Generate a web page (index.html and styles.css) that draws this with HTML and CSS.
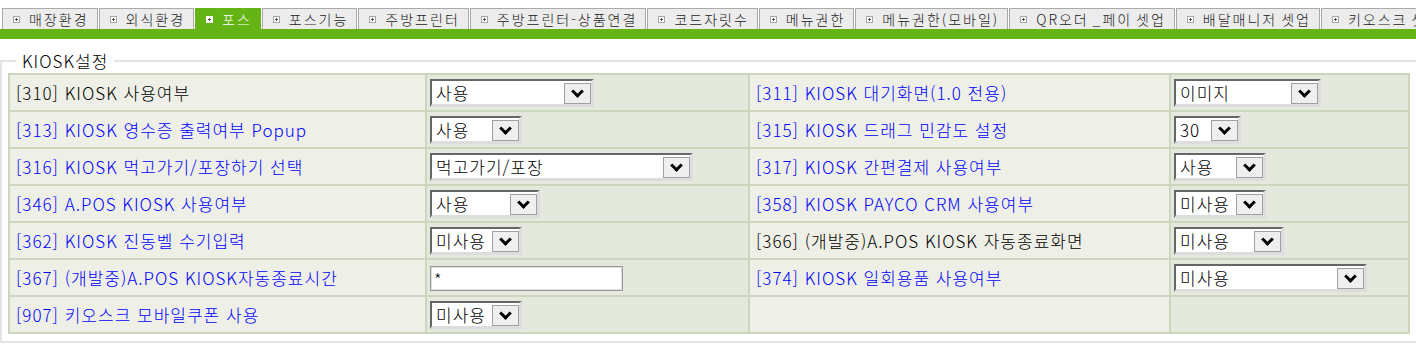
FILE: index.html
```html
<!DOCTYPE html>
<html lang="ko">
<head>
  <meta charset="UTF-8" />
  <title>KIOSK설정</title>
  <meta name="viewport" content="width=device-width, initial-scale=1.0" />
  <link rel="stylesheet" href="styles.css">
</head>
<body>
  <div id="tabs">
    <a class="tab">매장환경</a>
    <a class="tab">외식환경</a>
    <a class="tab active">포스</a>
    <a class="tab">포스기능</a>
    <a class="tab">주방프린터</a>
    <a class="tab">주방프린터-상품연결</a>
    <a class="tab">코드자릿수</a>
    <a class="tab">메뉴권한</a>
    <a class="tab">메뉴권한(모바일)</a>
    <a class="tab">QR오더 _페이 셋업</a>
    <a class="tab">배달매니저 셋업</a>
    <a class="tab">키오스크 셋업</a>
  </div>
  <div id="tabline"></div>

  <fieldset id="setup">
    <legend>KIOSK설정</legend>
    <table class="opts">
      <colgroup>
        <col class="c-label1">
        <col class="c-value1">
        <col class="c-label2">
        <col class="c-value2">
      </colgroup>
      <tr>
        <td class="label">[310] KIOSK 사용여부</td>
        <td class="value"><span class="sel w164"><span class="txt">사용</span><span class="btn"></span></span></td>
        <td class="label"><a>[311] KIOSK 대기화면(1.0 전용)</a></td>
        <td class="value"><span class="sel w147"><span class="txt">이미지</span><span class="btn"></span></span></td>
      </tr>
      <tr>
        <td class="label"><a>[313] KIOSK 영수증 출력여부 Popup</a></td>
        <td class="value"><span class="sel w92"><span class="txt">사용</span><span class="btn"></span></span></td>
        <td class="label"><a>[315] KIOSK 드래그 민감도 설정</a></td>
        <td class="value"><span class="sel w67"><span class="txt">30</span><span class="btn"></span></span></td>
      </tr>
      <tr>
        <td class="label"><a>[316] KIOSK 먹고가기/포장하기 선택</a></td>
        <td class="value"><span class="sel w263"><span class="txt">먹고가기/포장</span><span class="btn"></span></span></td>
        <td class="label"><a>[317] KIOSK 간편결제 사용여부</a></td>
        <td class="value"><span class="sel w92"><span class="txt">사용</span><span class="btn"></span></span></td>
      </tr>
      <tr>
        <td class="label"><a>[346] A.POS KIOSK 사용여부</a></td>
        <td class="value"><span class="sel w110"><span class="txt">사용</span><span class="btn"></span></span></td>
        <td class="label"><a>[358] KIOSK PAYCO CRM 사용여부</a></td>
        <td class="value"><span class="sel w92"><span class="txt">미사용</span><span class="btn"></span></span></td>
      </tr>
      <tr>
        <td class="label"><a>[362] KIOSK 진동벨 수기입력</a></td>
        <td class="value"><span class="sel w92"><span class="txt">미사용</span><span class="btn"></span></span></td>
        <td class="label">[366] (개발중)A.POS KIOSK 자동종료화면</td>
        <td class="value"><span class="sel w110"><span class="txt">미사용</span><span class="btn"></span></span></td>
      </tr>
      <tr>
        <td class="label"><a>[367] (개발중)A.POS KIOSK자동종료시간</a></td>
        <td class="value"><input class="field" type="text" value="*"></td>
        <td class="label"><a>[374] KIOSK 일회용품 사용여부</a></td>
        <td class="value"><span class="sel w193"><span class="txt">미사용</span><span class="btn"></span></span></td>
      </tr>
      <tr>
        <td class="label"><a>[907] 키오스크 모바일쿠폰 사용</a></td>
        <td class="value"><span class="sel w92"><span class="txt">미사용</span><span class="btn"></span></span></td>
        <td class="label"></td>
        <td class="value"></td>
      </tr>
    </table>
  </fieldset>
</body>
</html>
```

FILE: styles.css
```css
:root {
  --green: #64b416;
  --tab-bg: #ececec;
  --line: #ccd5bd;
  --label-bg: #eef0e7;
  --value-bg: #e5e8dc;
  --link: #0000ff;
}
body {
  margin: 0;
  background: #fff;
  font-family: "Noto Sans CJK KR", sans-serif;
  font-weight: 300;
  color: #000;
}

/* tab strip */
#tabs {
  display: flex;
  padding: 8px 0 0 2px;
  white-space: nowrap;
  overflow: hidden;
}
.tab {
  display: flex;
  align-items: center;
  flex-shrink: 0;
  gap: 9px;
  height: 20px;
  padding: 0 8px 0 10px;
  margin-right: 1px;
  border: 1px solid #aaa;
  border-bottom: none;
  background: var(--tab-bg);
  color: #222;
  font-size: 14px;
  letter-spacing: 2px;
  word-spacing: -2px;
  cursor: pointer;
}
.tab::before {
  content: "";
  width: 7px;
  height: 7px;
  flex-shrink: 0;
  box-sizing: border-box;
  border: 1px solid #a6a6a6;
  background:
    linear-gradient(#555, #555) center / 3px 1px no-repeat,
    linear-gradient(#555, #555) center / 1px 3px no-repeat,
    #fff;
}
.tab.active {
  background: var(--green);
  border-color: var(--green);
  color: #fff;
}
.tab.active::before {
  border-color: #fff;
}
#tabline {
  height: 10px;
  background: var(--green);
}

/* settings box */
#setup {
  margin: 11px 0 0;
  padding: 1px 6px 7px;
  border: 2px solid #e4e4e4;
}
#setup legend {
  margin-left: 8px;
  padding: 0 6px;
  font-size: 17px;
  line-height: 22px;
  letter-spacing: 1px;
}
.opts {
  width: 100%;
  table-layout: fixed;
  border-collapse: collapse;
  border: 2px solid var(--line);
  font-size: 17px;
  letter-spacing: 1px;
}
.c-label1 { width: 417px; }
.c-value1 { width: 323px; }
.c-label2 { width: 421px; }
.c-value2 { width: 239px; }
.opts td {
  height: 35px;
  padding: 0 3px;
  border: 2px solid var(--line);
  vertical-align: middle;
  white-space: nowrap;
}
.opts td.label {
  padding-left: 6px;
  background: var(--label-bg);
}
.opts td.value {
  background: var(--value-bg);
}
.label a {
  color: var(--link);
  text-decoration: none;
  cursor: pointer;
}

/* old style drop downs */
.sel {
  display: inline-flex;
  align-items: flex-start;
  height: 28px;
  box-sizing: border-box;
  border-style: solid;
  border-width: 2px 3px 3px 2px;
  border-color: #666 #ddd #ddd #666;
  background: #fff;
  vertical-align: middle;
}
.sel .txt {
  flex: 1;
  padding-left: 4px;
  line-height: 23px;
  overflow: hidden;
}
.sel .btn {
  display: flex;
  align-items: center;
  justify-content: center;
  width: 27px;
  height: 21px;
  margin-top: 2px;
  box-sizing: border-box;
  border: 1px solid #a0a0a0;
  background: #efefef;
}
.sel .btn::after {
  content: "";
  width: 9px;
  height: 9px;
  box-sizing: border-box;
  border: solid #000;
  border-width: 0 3px 3px 0;
  transform: rotate(45deg);
  margin-top: -5px;
}
.w67 { width: 67px; }
.w92 { width: 92px; }
.w110 { width: 110px; }
.w147 { width: 147px; }
.w164 { width: 164px; }
.w193 { width: 193px; }
.w263 { width: 263px; }

.field {
  width: 193px;
  height: 25px;
  box-sizing: border-box;
  margin: 0;
  padding: 0 3px;
  border: 1px solid #999;
  box-shadow: inset 0 0 0 1px #ddd;
  font-family: inherit;
  font-weight: 300;
  font-size: 17px;
  vertical-align: middle;
}
```
